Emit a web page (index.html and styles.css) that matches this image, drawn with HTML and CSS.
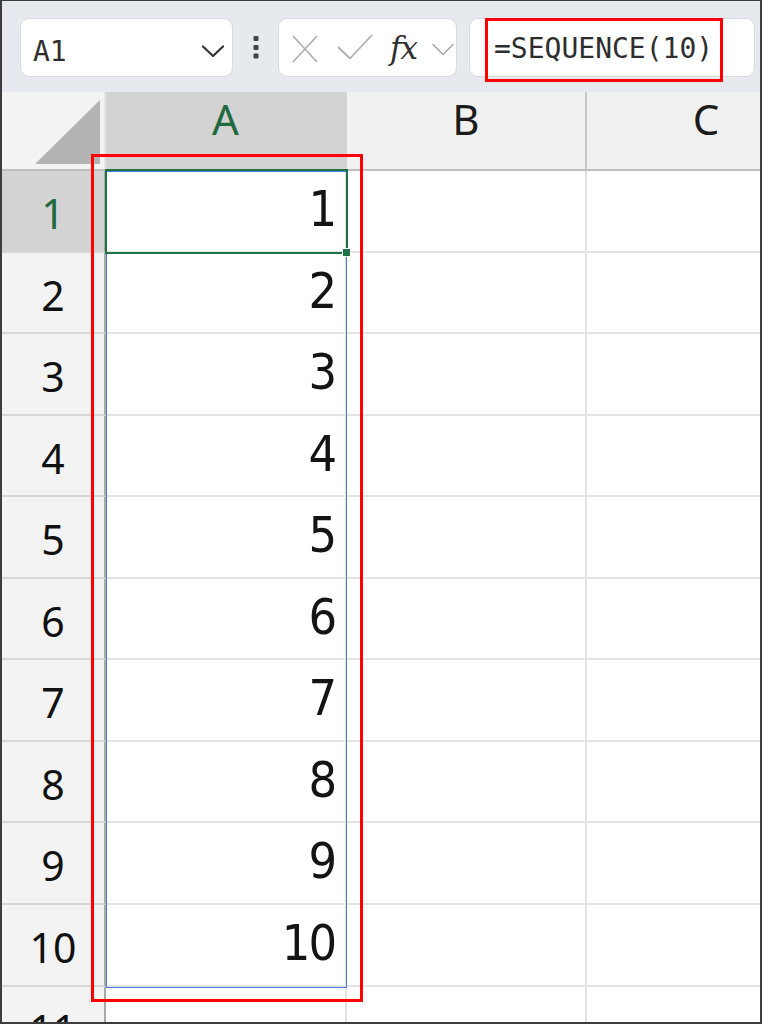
FILE: index.html
```html
<!DOCTYPE html>
<html lang="ja">
<head>
<meta charset="utf-8">
<title>SEQUENCE</title>
<link rel="stylesheet" href="styles.css">
</head>
<body>
<div class="frame">
  <div class="toolbar">
    <div class="box namebox">
      <span class="nb-val">A1</span>
      <svg class="nb-chev" width="24" height="13" viewBox="0 0 24 13"><path d="M2 1.5 L12 11 L22 1.5" fill="none" stroke="#333" stroke-width="2.2" stroke-linecap="round" stroke-linejoin="round"/></svg>
    </div>
    <div class="more">
      <svg width="6" height="23" viewBox="0 0 6 23"><rect x="0.5" y="0" width="5" height="5" rx="1" fill="#444"/><rect x="0.5" y="9" width="5" height="5" rx="1" fill="#444"/><rect x="0.5" y="17.5" width="5" height="5" rx="1" fill="#444"/></svg>
    </div>
    <div class="box fxbox">
      <svg class="fx-icons" width="100" height="57" viewBox="0 0 100 57"><path d="M14 17 L38 43 M38 17 L14 43" stroke="#b0b0b0" stroke-width="1.8" fill="none"/><path d="M59 28 L71 39.5 L93 16" stroke="#b0b0b0" stroke-width="1.8" fill="none" stroke-linejoin="round"/></svg>
      <span class="fx">fx</span>
      <svg class="fx-chev" width="23" height="13" viewBox="0 0 23 13"><path d="M2 1.5 L12 11.5 L22 1.5" fill="none" stroke="#a9a9a9" stroke-width="1.6" stroke-linecap="round" stroke-linejoin="round"/></svg>
    </div>
    <div class="box formula">=SEQUENCE(10)</div>
    <div class="formula-mark"></div>
  </div>

  <div class="grid">
    <div class="corner"><svg width="102" height="77" viewBox="0 0 102 77"><polygon points="33,72 98,8 98,72" fill="#b4b4b4"/></svg></div>
    <div class="ch sel">A</div>
    <div class="ch">B</div>
    <div class="ch">C</div>

    <div class="rh sel">1</div><div class="c num">1</div><div class="c"></div><div class="c"></div>
    <div class="rh">2</div><div class="c num">2</div><div class="c"></div><div class="c"></div>
    <div class="rh">3</div><div class="c num">3</div><div class="c"></div><div class="c"></div>
    <div class="rh">4</div><div class="c num">4</div><div class="c"></div><div class="c"></div>
    <div class="rh">5</div><div class="c num">5</div><div class="c"></div><div class="c"></div>
    <div class="rh">6</div><div class="c num">6</div><div class="c"></div><div class="c"></div>
    <div class="rh">7</div><div class="c num">7</div><div class="c"></div><div class="c"></div>
    <div class="rh">8</div><div class="c num">8</div><div class="c"></div><div class="c"></div>
    <div class="rh">9</div><div class="c num">9</div><div class="c"></div><div class="c"></div>
    <div class="rh">10</div><div class="c num">10</div><div class="c"></div><div class="c"></div>
    <div class="rh">11</div><div class="c"></div><div class="c"></div><div class="c"></div>

    <div class="spill"></div>
    <div class="selbox"></div>
    <div class="handle"></div>
    <div class="highlight"></div>
  </div>
</div>
</body>
</html>
```

FILE: styles.css
```css
* { box-sizing: border-box; }
html, body { margin: 0; padding: 0; background: #ffffff; }

.frame {
  width: 762px;
  height: 1024px;
  border: 2px solid #3d3d3d;
  border-top-width: 1px;
  overflow: hidden;
  background: #ffffff;
  display: flex;
  flex-direction: column;
}

/* ---------- toolbar ---------- */
.toolbar {
  position: relative;
  flex: none;
  height: 91px;
  background: #e6e9ed;
  display: flex;
  align-items: flex-start;
  padding: 17px 0 0 18px;
}
.box {
  height: 59px;
  background: #ffffff;
  border: 1px solid #d8dade;
  border-radius: 9px;
  display: flex;
  align-items: center;
}
.namebox {
  width: 213px;
  padding: 0 7px 0 12px;
  font-family: "DejaVu Sans Mono", "Liberation Mono", monospace;
  font-size: 28px;
  color: #2e2e2e;
}
.nb-val { flex: 1; line-height: 28px; padding-top: 8px; }
.nb-chev { display: block; margin-top: 7px; }
.more {
  width: 45px;
  height: 59px;
  display: flex;
  align-items: center;
  justify-content: center;
}
.more svg { display: block; }
.fxbox { width: 179px; }
.fx-icons { display: block; flex: none; }
.fx {
  width: 41px;
  margin-left: 11px;
  font-family: "DejaVu Serif", "Liberation Serif", serif;
  font-style: italic;
  font-size: 31px;
  line-height: 32px;
  letter-spacing: -1px;
  color: #2f2f2f;
}
.fx-chev { display: block; margin-top: 3px; }
.formula {
  flex: 1;
  margin-left: 12px;
  margin-right: 5px;
  padding-left: 24px;
  padding-top: 2px;
  font-family: "DejaVu Sans Mono", "Liberation Mono", monospace;
  font-size: 28px;
  line-height: 28px;
  color: #2e2e2e;
  white-space: nowrap;
}
.formula-mark {
  position: absolute;
  left: 483px;
  top: 17px;
  width: 238px;
  height: 64px;
  border: 3px solid #ff0000;
}

/* ---------- grid ---------- */
.grid {
  position: relative;
  flex: none;
  display: grid;
  grid-template-columns: 104px 241px 240px 240px;
  grid-template-rows: 79px 82px 81px 82px 81px 82px 81px 82px 81px 82px 82px 82px;
}
.corner {
  background: #f3f3f3;
  border-right: 2px solid #e4e4e4;
  border-bottom: 2px solid #bfbfbf;
}
.corner svg { display: block; }
.ch {
  background: #f1f1f1;
  border-right: 2px solid #c8c8c8;
  border-bottom: 2px solid #bfbfbf;
  font-family: "Noto Sans", "Open Sans", sans-serif;
  font-size: 42px;
  line-height: 42px;
  padding-top: 6px;
  text-align: center;
  color: #1c1c1c;
}
.ch.sel {
  background: #d3d3d3;
  border-right-color: #d3d3d3;
  color: #1f6b3f;
}
.rh {
  background: #f3f3f3;
  border-right: 2px solid #a9a9a9;
  border-bottom: 2px solid #d6d6d6;
  font-family: "Noto Sans", "Open Sans", sans-serif;
  font-size: 41px;
  line-height: 40px;
  padding-top: 22px;
  text-align: center;
  color: #111111;
}
.rh.sel {
  background: #d3d3d3;
  color: #1f6b3f;
}
.c {
  background: #ffffff;
  border-right: 2px solid #e3e3e3;
  border-bottom: 2px solid #e3e3e3;
}
.num {
  font-family: "DejaVu Sans Condensed", "Noto Sans", sans-serif;
  font-stretch: condensed;
  font-size: 50px;
  line-height: 52px;
  padding-top: 12px;
  padding-right: 10px;
  letter-spacing: -2px;
  text-align: right;
  color: #141414;
}

/* ---------- overlays ---------- */
.spill {
  position: absolute;
  left: 104px;
  top: 79px;
  width: 241px;
  height: 817px;
  border: 1px solid #4a7bd4;
}
.selbox {
  position: absolute;
  left: 103px;
  top: 77px;
  width: 243px;
  height: 85px;
  border: 2px solid #1f7244;
}
.handle {
  position: absolute;
  left: 340px;
  top: 156px;
  width: 9px;
  height: 9px;
  background: #1f7244;
  border: 1px solid #ffffff;
}
.highlight {
  position: absolute;
  left: 89px;
  top: 62px;
  width: 272px;
  height: 848px;
  border: 3px solid #ff0000;
}
```
